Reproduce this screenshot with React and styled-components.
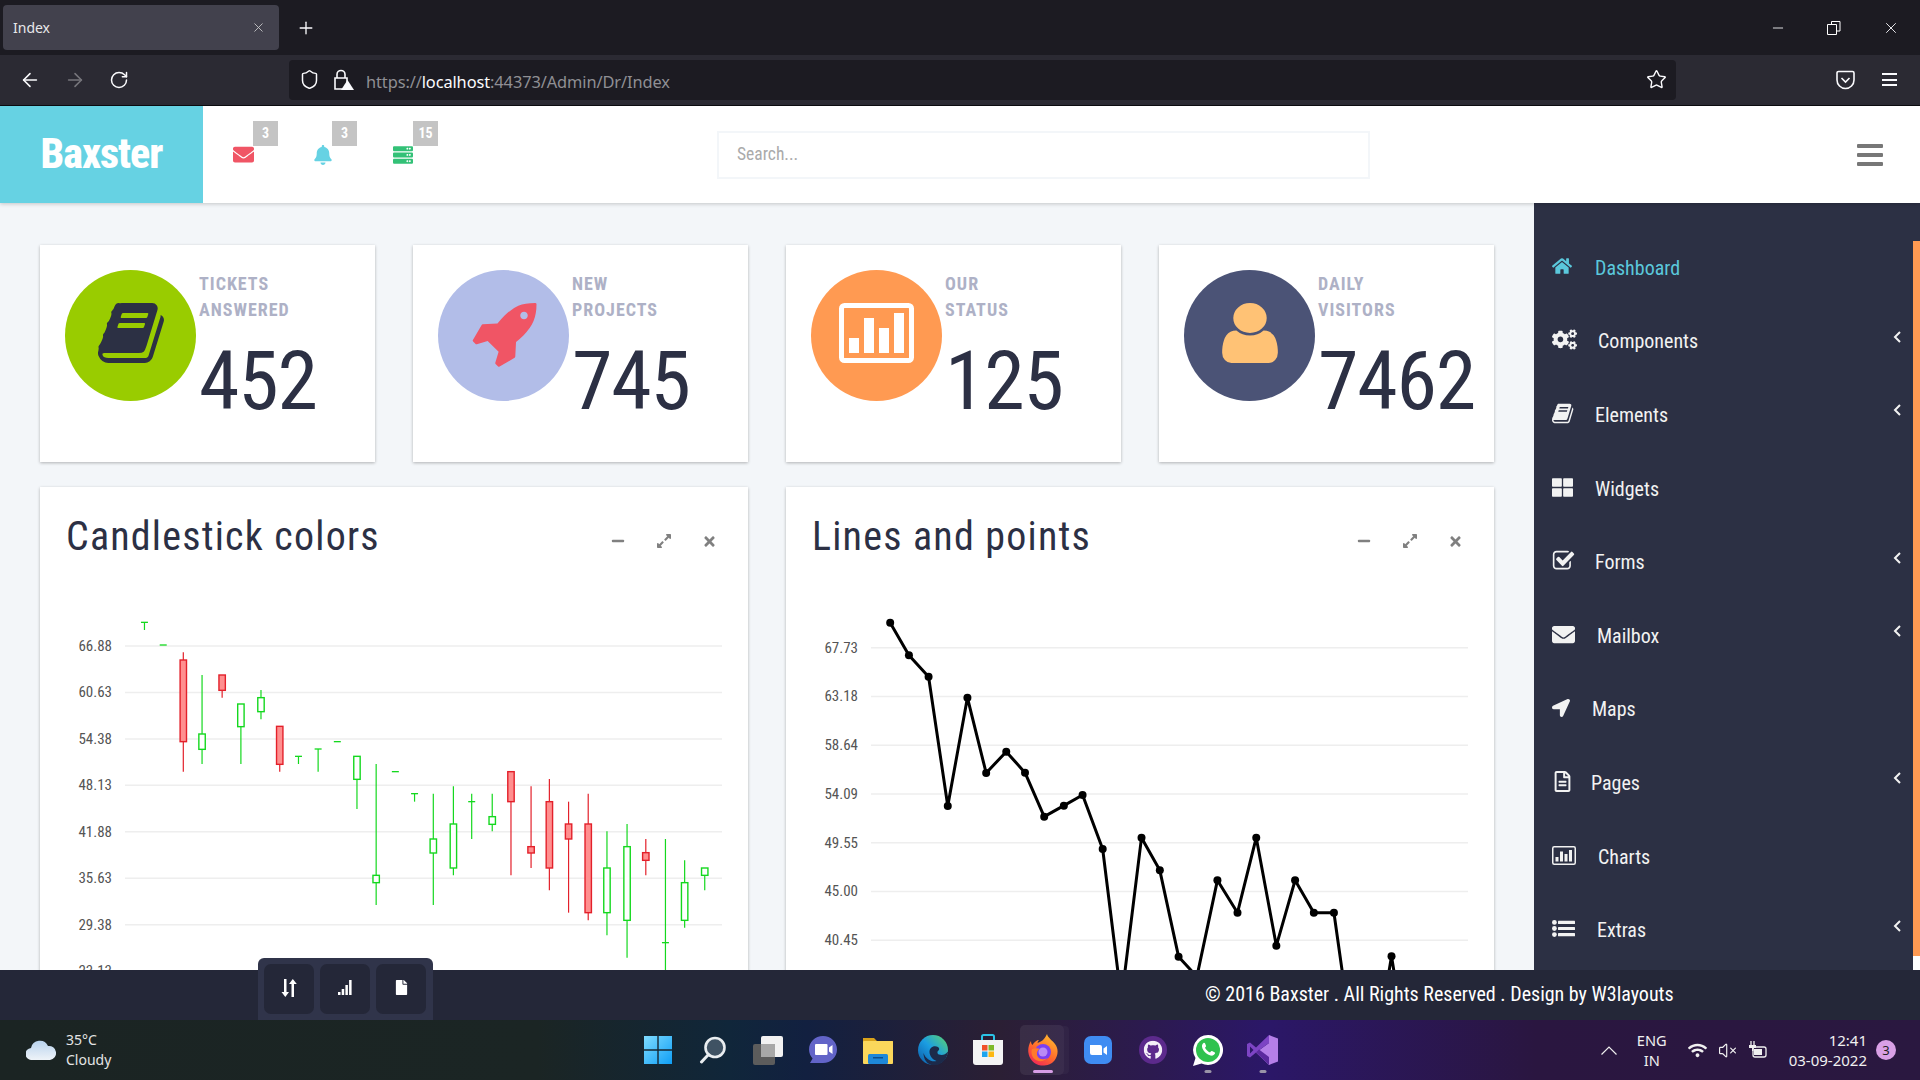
import React from 'react';
import styled, { createGlobalStyle, css } from 'styled-components';
import { FaHome, FaCogs, FaThLarge, FaEnvelope, FaLocationArrow, FaRegFileAlt, FaBell, FaServer, FaMinus, FaExpandAlt, FaTimes, FaFile, FaGithub, FaWifi } from 'react-icons/fa';
import { ArrowLeft, ArrowRight, RotateCw, Shield, Star, X, Plus, Minus, VolumeX } from 'lucide-react';

const BOOK = 'M1639 478q40 57 18 129l-275 906q-19 64-76.5 107.5t-122.5 43.5h-923q-77 0-148.5-53.5t-99.5-131.5q-24-67-2-127 0-4 3-27t4-37q1-8-3-21.5t-3-19.5q2-11 8-21t16.5-23.5 16.5-23.5q23-38 45-91.5t30-91.5q3-10 .5-30t-.5-28q3-11 17-28t17-23q21-36 42-92t25-90q1-9-2.5-32t.5-28q4-13 22-30.5t22-22.5q19-26 42.5-84.5t27.5-96.5q1-8-3-25.5t-2-26.5q2-8 9-18t18-23 17-21q8-12 16.5-30.5t15-35 16-36 19.5-32 26.5-23.5 36-11.5 47.5 5.5l-1 3q38-9 51-9h761q74 0 114 56t18 130l-274 906q-36 119-71.5 153.5t-128.5 34.5h-869q-27 0-38 15-11 16-1 43 24 70 144 70h923q29 0 56-15.5t35-41.5l300-987q7-22 5-57 38 15 59 43zm-1064 2q-4 13 2 22.5t20 9.5h608q13 0 25.5-9.5t16.5-22.5l21-64q4-13-2-22.5t-20-9.5h-608q-13 0-25.5 9.5t-16.5 22.5zm-83 256q-4 13 2 22.5t20 9.5h608q13 0 25.5-9.5t16.5-22.5l21-64q4-13-2-22.5t-20-9.5h-608q-13 0-25.5 9.5t-16.5 22.5z';
const ROCKET = 'M1504 448q0-40-28-68t-68-28-68 28-28 68 28 68 68 28 68-28 28-68zm224-288q0 249-75.5 430.5t-253.5 360.5q-81 80-195 176l-20 379q-2 16-16 26l-384 224q-7 4-16 4-12 0-23-9l-64-64q-13-14-8-32l85-276-281-281-276 85q-3 1-9 1-14 0-23-9l-64-64q-17-19-5-39l224-384q10-14 26-16l379-20q96-114 176-195 188-187 358-258t431-71q14 0 24 9.5t10 22.5z';
const USER = 'M1536 1399q0 109-62.5 187t-150.5 78h-854q-88 0-150.5-78t-62.5-187q0-85 8.5-160.5t31.5-152 58.5-131 94-89 134.5-34.5q131 128 313 128t313-128q76 0 134.5 34.5t94 89 58.5 131 31.5 152 8.5 160.5zm-256-887q0 159-112.5 271.5t-271.5 112.5-271.5-112.5-112.5-271.5 112.5-271.5 271.5-112.5 271.5 112.5 112.5 271.5z';
const CHECK = 'M1472 930v318q0 119-84.5 203.5t-203.5 84.5h-832q-119 0-203.5-84.5t-84.5-203.5v-832q0-119 84.5-203.5t203.5-84.5h832q63 0 117 25 15 7 18 23 3 17-9 29l-49 49q-10 10-23 10-3 0-9-2-23-6-45-6h-832q-66 0-113 47t-47 113v832q0 66 47 113t113 47h832q66 0 113-47t47-113v-254q0-13 9-22l64-64q10-10 23-10 6 0 12 3 20 8 20 29zm231-489l-814 814q-24 24-57 24t-57-24l-430-430q-24-24-24-57t24-57l110-110q24-24 57-24t57 24l263 263 647-647q24-24 57-24t57 24l110 110q24 24 24 57t-24 57z';

const narrow = css`
  font-family: "Roboto Condensed", Roboto, "Liberation Sans", sans-serif;
  font-stretch: 75%;
`;
const ui = css`
  font-family: "Noto Sans", "Open Sans", sans-serif;
`;

const GlobalStyle = createGlobalStyle`
  * { box-sizing: border-box; }
  html, body { margin: 0; height: 100%; overflow: hidden; background: #f3f6f9; }
`;

const Page = styled.div`
  width: 1920px;
  height: 1080px;
  display: flex;
  flex-direction: column;
  overflow: hidden;
  position: relative;
`;

/* browser chrome */
const TabStrip = styled.div`
  height: 55px;
  background: #1c1b22;
  display: flex;
  align-items: flex-start;
  color: #fbfbfe;
  ${ui}
`;
const Tab = styled.div`
  width: 276px;
  height: 45px;
  margin: 5px 0 0 3px;
  padding: 0 13px 0 10px;
  background: #42414d;
  border-radius: 4px;
  display: flex;
  align-items: center;
  justify-content: space-between;
  font-size: 14px;
  color: #e8e8ea;
`;
const NewTab = styled.div`
  margin: 14px 0 0 17px;
  height: 28px;
  display: flex;
  align-items: center;
`;
const WindowButtons = styled.div`
  margin-left: auto;
  height: 55px;
  display: flex;
  align-items: center;
  padding-right: 20px;
  gap: 41px;
`;
const ToolBar = styled.div`
  height: 51px;
  padding-bottom: 1px;
  background: #2b2a33;
  border-bottom: 1px solid #0c0c10;
  display: flex;
  align-items: center;
  color: #fbfbfe;
`;
const NavButtons = styled.div`
  width: 289px;
  display: flex;
  align-items: center;
  padding-left: 19px;
  gap: 23px;
`;
const UrlBar = styled.div`
  width: 1387px;
  height: 40px;
  background: #1c1b22;
  border-radius: 4px;
  display: flex;
  align-items: center;
  padding: 0 9px 0 10px;
  ${ui}
`;
const LockGlyph = styled.svg`
  margin-left: 12px;
`;
const UrlText = styled.div`
  margin: 3px 0 0 12px;
  font-size: 16.4px;
  color: #8f8f94;
  letter-spacing: -0.1px;
  b { font-weight: 400; color: #fbfbfe; }
`;
const UrlSpacer = styled.div`
  flex: 1;
`;
const ToolRight = styled.div`
  display: flex;
  align-items: center;
  gap: 27px;
  margin-left: 160px;
`;
const MenuLines = styled.div`
  width: 15px;
  height: 13px;
  border-top: 2px solid #fbfbfe;
  border-bottom: 2px solid #fbfbfe;
  position: relative;
  &::after {
    content: "";
    position: absolute;
    left: 0;
    right: 0;
    top: 3.5px;
    height: 2px;
    background: #fbfbfe;
  }
`;

/* app header */
const Header = styled.header`
  height: 97px;
  background: #fff;
  display: flex;
  align-items: center;
  box-shadow: 0 1px 4px rgba(0, 0, 0, 0.2);
  position: relative;
  z-index: 2;
`;
const Logo = styled.div`
  width: 203px;
  height: 97px;
  background: #66d2e3;
  color: #fff;
  display: flex;
  align-items: center;
  justify-content: center;
  font-size: 42px;
  font-weight: 800;
  letter-spacing: -1px;
  padding-bottom: 2px;
  ${narrow}
`;
const Notify = styled.div`
  display: flex;
  padding-left: 30px;
`;
const NotifyItem = styled.div`
  width: 80px;
  height: 20px;
  display: flex;
  align-items: center;
  position: relative;
  color: ${p => p.$color};
`;
const Badge = styled.span`
  position: absolute;
  left: ${p => p.$left}px;
  top: -24px;
  width: 25px;
  height: 25px;
  background: #c4c4c4;
  color: #fff;
  font-size: 14px;
  font-weight: 700;
  display: flex;
  align-items: center;
  justify-content: center;
  ${narrow}
`;
const Search = styled.div`
  width: 653px;
  height: 48px;
  margin-left: 244px;
  border: 2px solid #f3f6f9;
  display: flex;
  align-items: center;
  padding: 0 0 2px 18px;
  color: #aaa;
  font-size: 17.5px;
  ${narrow}
`;
const Burger = styled.div`
  margin-left: auto;
  margin-right: 37px;
  width: 26px;
  height: 22px;
  display: flex;
  flex-direction: column;
  justify-content: space-between;
  span {
    height: 4px;
    background: #777;
    border-radius: 1px;
  }
`;

/* body */
const Body = styled.div`
  flex: 1;
  min-height: 0;
  display: flex;
`;
const Main = styled.main`
  width: 1534px;
  padding: 42px 40px 0;
  overflow: hidden;
  background: #f3f6f9;
`;
const StatRow = styled.div`
  display: grid;
  grid-template-columns: repeat(4, 335px);
  gap: 38px;
  margin-bottom: 25px;
`;
const StatCard = styled.div`
  height: 217px;
  background: #fff;
  box-shadow: 0 1px 3px rgba(0, 0, 0, 0.28);
  padding: 25px 0 0 25px;
  display: flex;
`;
const Circle = styled.div`
  width: 131px;
  height: 131px;
  flex: none;
  border-radius: 50%;
  background: ${p => p.$bg};
  display: flex;
  align-items: center;
  justify-content: center;
  padding: 0 0 5px ${p => p.$shift || 0}px;
  margin-right: 3px;
`;
const StatText = styled.div`
  ${narrow}
`;
const StatLabel = styled.div`
  font-size: 18px;
  line-height: 26px;
  font-weight: 700;
  letter-spacing: 1px;
  color: #aeb1c6;
  text-transform: uppercase;
  margin-top: 1px;
`;
const StatNumber = styled.div`
  font-size: 82px;
  line-height: 82px;
  font-weight: 400;
  letter-spacing: -1.2px;
  color: #2c3044;
  margin-top: 17px;
`;
const PanelRow = styled.div`
  display: grid;
  grid-template-columns: repeat(2, 708px);
  gap: 38px;
`;
const Panel = styled.section`
  height: 600px;
  background: #fff;
  box-shadow: 0 1px 3px rgba(0, 0, 0, 0.28);
`;
const PanelHead = styled.div`
  height: 103px;
  padding: 27px 0 0 26px;
  display: flex;
  align-items: flex-start;
  justify-content: space-between;
`;
const PanelTitle = styled.h3`
  margin: 0;
  font-size: 40px;
  line-height: 46px;
  font-weight: 400;
  letter-spacing: 1.2px;
  color: #2c3044;
  ${narrow}
`;
const PanelControls = styled.div`
  display: flex;
  align-items: center;
  gap: 30.5px;
  margin: 19px 31px 0 0;
  color: #808080;
`;
const ChartSvg = styled.svg`
  display: block;
  text {
    ${narrow}
    font-size: 15px;
    fill: #555;
  }
`;

/* sidebar */
const Sidebar = styled.aside`
  width: 386px;
  background: #2c3044;
  display: flex;
`;
const Nav = styled.nav`
  flex: 1;
  padding-top: 28px;
`;
const NavRow = styled.div`
  height: 73.6px;
  padding: 0 12px 0 18px;
  display: flex;
  align-items: center;
  color: ${p => (p.$active ? '#5bc8dc' : '#f2f2f2')};
  font-size: 20px;
  ${narrow}
`;
const NavIcon = styled.div`
  width: ${p => p.$w}px;
  flex: none;
  display: flex;
  align-items: center;
  margin-top: -3px;
`;
const Chevron = styled.svg`
  margin-left: auto;
  margin-top: -9px;
`;
const ScrollTrack = styled.div`
  width: 7px;
  padding-top: 38px;
  display: flex;
  flex-direction: column;
`;
const ScrollThumb = styled.div`
  height: 715px;
  background: #ff9a52;
`;
const ScrollRest = styled.div`
  flex: 1;
  background: #fff;
`;

/* footer */
const Footer = styled.footer`
  height: 50px;
  background: #242738;
  color: #fff;
  font-size: 20px;
  padding: 0 0 2px 1205px;
  display: flex;
  align-items: center;
  ${narrow}
`;
const FloatBar = styled.div`
  position: absolute;
  left: 258px;
  top: 958px;
  width: 175px;
  height: 62px;
  background: #30344a;
  border-radius: 6px 6px 0 0;
  padding: 6px;
  display: flex;
  gap: 6px;
`;
const FloatButton = styled.div`
  width: 50px;
  height: 50px;
  background: #242738;
  border-radius: 7px;
  color: #fff;
  display: flex;
  align-items: center;
  justify-content: center;
  padding-bottom: 3px;
`;

/* windows taskbar */
const Taskbar = styled.div`
  height: 60px;
  background: linear-gradient(90deg, #1b2423 0%, #1b2524 28%, #10263a 38%, #122040 42%, #2b1f34 52%, #2c1a50 60%, #2b1768 66%, #2a1640 80%, #2a1840 100%);
  display: flex;
  align-items: center;
  position: relative;
  color: #fff;
  ${ui}
`;
const Weather = styled.div`
  width: 630px;
  padding-left: 26px;
  display: flex;
  align-items: center;
  gap: 10px;
`;
const WeatherText = styled.div`
  font-size: 14px;
  line-height: 20px;
  color: #e4e4e4;
`;
const Apps = styled.div`
  display: flex;
`;
const AppSlot = styled.div`
  width: 55px;
  height: 60px;
  display: flex;
  align-items: center;
  justify-content: center;
  position: relative;
  ${p => p.$active && css`
    &::before {
      content: "";
      position: absolute;
      left: 5px;
      top: 5px;
      width: 44px;
      height: 50px;
      border-radius: 5px;
      background: rgba(255, 255, 255, 0.07);
      box-shadow: 6px 0 0 -1px rgba(255, 255, 255, 0.03);
    }
  `}
  &::after {
    ${p => p.$pill && css`content: "";`}
    position: absolute;
    bottom: 7px;
    left: 50%;
    transform: translateX(-50%);
    width: ${p => (p.$active ? 20 : 7)}px;
    height: 3px;
    border-radius: 2px;
    background: ${p => (p.$active ? '#d79ee6' : '#9a94a8')};
  }
  svg { position: relative; }
`;
const Tray = styled.div`
  margin-left: auto;
  display: flex;
  align-items: center;
  font-size: 14.6px;
  color: #f0f0f0;
  padding-right: 24px;
`;
const TrayLang = styled.div`
  text-align: center;
  line-height: 20px;
  margin: 0 21px 0 20px;
`;
const TrayIcons = styled.div`
  display: flex;
  align-items: center;
  gap: 11px;
`;
const Clock = styled.div`
  text-align: right;
  line-height: 20px;
  font-size: 15px;
  margin: 0 9px 0 21px;
`;
const Counter = styled.div`
  width: 20px;
  height: 20px;
  border-radius: 50%;
  background: #d9a0e6;
  color: #222;
  font-size: 13px;
  display: flex;
  align-items: center;
  justify-content: center;
`;

const Fa4 = ({ d, w, h, fill }) => (
  <svg width={w} height={h} viewBox="0 0 1792 1792" preserveAspectRatio="none" fill={fill}><path d={d} /></svg>
);

const Angle = () => (
  <Chevron width="8" height="12" viewBox="0 0 8 12" fill="none" stroke="#f2f2f2" strokeWidth="2"><path d="M7 1 2 6l5 5" /></Chevron>
);

const ChartGlyph = () => (
  <svg width="24" height="19" viewBox="0 0 24 19" fill="#f2f2f2">
    <rect x=".75" y=".75" width="22.500" height="17.500" rx="1.500" fill="none" stroke="#f2f2f2" strokeWidth="1.500" />
    <rect x="3.500" y="11" width="3" height="4.500" />
    <rect x="8" y="5.500" width="3" height="10" />
    <rect x="12.500" y="8" width="3" height="7.500" />
    <rect x="17" y="4" width="3" height="11.500" />
  </svg>
);

const ListGlyph = () => (
  <svg width="23" height="17" viewBox="0 0 23 17" fill="#f2f2f2">
    <circle cx="2.400" cy="2.400" r="2.400" />
    <circle cx="2.400" cy="8.500" r="2.400" />
    <circle cx="2.400" cy="14.600" r="2.400" />
    <rect x="6" y="0.800" width="17" height="3.200" rx=".5" />
    <rect x="6" y="6.900" width="17" height="3.200" rx=".5" />
    <rect x="6" y="13" width="17" height="3.200" rx=".5" />
  </svg>
);

const stats = [
  { l1: 'Tickets', l2: 'Answered', n: '452', bg: '#99cc00', shift: 5, icon: <Fa4 d={BOOK} w={71} h={70} fill="#2c3044" /> },
  { l1: 'New', l2: 'Projects', n: '745', bg: '#b2bde8', icon: <Fa4 d={ROCKET} w={70} h={70} fill="#f05565" /> },
  {
    l1: 'Our', l2: 'Status', n: '125', bg: '#ff9a52', icon: (
      <svg width="75" height="60" viewBox="0 0 75 60" fill="#fff">
        <rect x="2.5" y="2.5" width="70" height="55" rx="3" fill="none" stroke="#fff" strokeWidth="5" />
        <rect x="10" y="35" width="10" height="15" />
        <rect x="25" y="15" width="10" height="35" />
        <rect x="40" y="25" width="10" height="25" />
        <rect x="55" y="10" width="10" height="40" />
      </svg>
    ),
  },
  { l1: 'Daily', l2: 'Visitors', n: '7462', bg: '#4b5376', icon: <Fa4 d={USER} w={78} h={70} fill="#ffc275" /> },
];

const nav = [
  { t: 'Dashboard', w: 43, active: true, icon: <FaHome size={20} /> },
  { t: 'Components', w: 46, more: true, icon: <FaCogs size={25} /> },
  { t: 'Elements', w: 43, more: true, icon: <Fa4 d={BOOK} w={23} h={23} fill="#f2f2f2" /> },
  { t: 'Widgets', w: 43, icon: <FaThLarge size={21} /> },
  { t: 'Forms', w: 43, more: true, icon: <Fa4 d={CHECK} w={23} h={24} fill="#f2f2f2" /> },
  { t: 'Mailbox', w: 45, more: true, icon: <FaEnvelope size={23} /> },
  { t: 'Maps', w: 40, icon: <FaLocationArrow size={18} /> },
  { t: 'Pages', w: 39, more: true, icon: <FaRegFileAlt size={21} /> },
  { t: 'Charts', w: 46, icon: <ChartGlyph /> },
  { t: 'Extras', w: 45, more: true, icon: <ListGlyph /> },
];

// [x, wickTop, wickBottom, bodyTop, bodyBottom] in picture units, see toX / toY
const candles = [
  [234, 97, 120, 97, 97, 'g'], [276, 165, 165, 165, 165, 'g'], [321, 187, 545, 210, 455, 'r'],
  [363, 255, 522, 432, 478, 'g'], [408, 255, 323, 255, 301, 'r'], [450, 342, 522, 342, 410, 'g'],
  [495, 300, 388, 323, 365, 'g'], [537, 409, 545, 409, 523, 'r'], [579, 499, 522, 499, 499, 'g'],
  [623, 477, 545, 477, 477, 'g'], [666, 455, 455, 455, 455, 'g'], [710, 499, 657, 499, 568, 'g'],
  [753, 522, 945, 856, 878, 'g'], [796, 545, 545, 545, 545, 'g'], [839, 611, 635, 611, 611, 'g'],
  [881, 611, 945, 747, 789, 'g'], [926, 589, 856, 702, 834, 'g'], [967, 611, 747, 635, 635, 'g'],
  [1013, 611, 724, 680, 703, 'g'], [1055, 545, 856, 545, 635, 'r'], [1100, 589, 834, 770, 789, 'r'],
  [1141, 567, 901, 635, 834, 'r'], [1184, 635, 968, 702, 747, 'r'], [1228, 611, 991, 702, 968, 'r'],
  [1270, 724, 1036, 834, 968, 'g'], [1315, 702, 1103, 770, 991, 'g'], [1357, 747, 856, 788, 811, 'r'],
  [1401, 747, 1200, 1058, 1058, 'g'], [1444, 811, 1013, 878, 991, 'g'], [1489, 834, 901, 834, 856, 'g'],
];
const toX = v => v / 2.24;
const toY = v => v / 3;

const CandleChart = () => {
  const labels = ['66.88', '60.63', '54.38', '48.13', '41.88', '35.63', '29.38', '23.13'];
  return (
    <ChartSvg width="708" height="420">
      {labels.map((l, i) => {
        const y = 56 + i * 46.45;
        return (
          <g key={l}>
            <line x1="85" x2="682" y1={y} y2={y} stroke="#eee" strokeWidth="1.5" />
            <text x="72" y={y + 5} textAnchor="end">{l}</text>
          </g>
        );
      })}
      {candles.map(([x, wt, wb, bt, bb, c]) => {
        const col = c === 'r' ? '#e3202a' : '#14d81e';
        const flat = bt === bb;
        return (
          <g key={x}>
            <line x1={toX(x)} x2={toX(x)} y1={toY(wt)} y2={toY(wb)} stroke={col} strokeWidth="1.2" />
            {flat
              ? <line x1={toX(x) - 3.5} x2={toX(x) + 3.5} y1={toY(bt)} y2={toY(bt)} stroke={col} strokeWidth="1.3" />
              : <rect x={toX(x) - 3.2} y={toY(bt)} width="6.4" height={toY(bb - bt)} fill={c === 'r' ? '#ff8f8f' : '#fff'} stroke={col} strokeWidth="1.4" />}
          </g>
        );
      })}
    </ChartSvg>
  );
};

const linePoints = [
  [202, 98], [244, 196], [288, 260], [331, 648], [375, 323], [417, 549], [462, 485], [504, 548], [547, 680],
  [591, 647], [633, 615], [678, 777], [720, 1230], [765, 743], [806, 841], [848, 1100], [889, 1160], [935, 871],
  [980, 968], [1022, 743], [1067, 1067], [1109, 871], [1151, 968], [1196, 968], [1238, 1366], [1282, 1443],
  [1325, 1099], [1367, 1443],
];

const LineChart = () => {
  const labels = ['67.73', '63.18', '58.64', '54.09', '49.55', '45.00', '40.45'];
  const px = v => 14 + v / 2.24;
  return (
    <ChartSvg width="708" height="420">
      {labels.map((l, i) => {
        const y = 57.7 + i * 48.75;
        return (
          <g key={l}>
            <line x1="85" x2="682" y1={y} y2={y} stroke="#eee" strokeWidth="1.5" />
            <text x="72" y={y + 5} textAnchor="end">{l}</text>
          </g>
        );
      })}
      <polyline fill="none" stroke="#000" strokeWidth="3" strokeLinejoin="round"
        points={linePoints.map(([x, y]) => `${px(x)},${toY(y)}`).join(' ')} />
      {linePoints.map(([x, y]) => <circle key={x} cx={px(x)} cy={toY(y)} r="4" fill="#000" />)}
    </ChartSvg>
  );
};

const PanelButtons = () => (
  <PanelControls>
    <FaMinus size={14} />
    <FaExpandAlt size={16} />
    <FaTimes size={15} />
  </PanelControls>
);

const WinLogo = () => (
  <svg width="30" height="30" viewBox="0 0 30 30">
    <defs><linearGradient id="win" x1="0" y1="0" x2="1" y2="1"><stop offset="0" stopColor="#7fdcff" /><stop offset="1" stopColor="#0f9ef5" /></linearGradient></defs>
    <path fill="url(#win)" d="M1 1h13.3v13.3H1zM15.7 1H29v13.3H15.7zM1 15.7h13.3V29H1zM15.7 15.7H29V29H15.7z" />
  </svg>
);
const SearchGlyph = () => (
  <svg width="28" height="28" viewBox="0 0 28 28">
    <circle cx="16" cy="11.5" r="9.5" fill="#3f5263" stroke="#e9edf0" strokeWidth="2.6" />
    <path d="M9.5 18.5 2.5 26" stroke="#e9edf0" strokeWidth="3" strokeLinecap="round" />
  </svg>
);
const TaskView = () => (
  <svg width="30" height="30" viewBox="0 0 30 30">
    <rect x="0" y="9" width="22" height="21" rx="2" fill="#5c5c5c" />
    <rect x="8" y="1" width="22" height="21" rx="2" fill="#f2f2f2" />
    <rect x="8" y="9" width="14" height="13" fill="#a8a8a8" />
  </svg>
);
const ChatIcon = () => (
  <svg width="28" height="30" viewBox="0 0 28 30">
    <path fill="#6264c8" d="M14 1c8 0 14 6 14 13.5S22 28 14 28H1l2.6-4.5C1.500 21 0 18 0 14.500 0 7 6 1 14 1z" />
    <path fill="#fff" d="M7 9h10.500a1 1 0 0 1 1 1v9a1 1 0 0 1-1 1H7a1 1 0 0 1-1-1v-9a1 1 0 0 1 1-1zM20 12.500l3.500-2.500v9L20 16.500z" />
  </svg>
);
const FolderIcon = () => (
  <svg width="30" height="30" viewBox="0 0 30 30">
    <path fill="#d9a21b" d="M0 3h11l3 3h16v6H0z" />
    <rect y="6" width="30" height="23" rx="1" fill="#fbd75b" />
    <rect x="5" y="19" width="20" height="10" rx="1.500" fill="#1e88d8" />
    <rect x="10" y="22" width="10" height="1.500" fill="#0d4f8c" />
  </svg>
);
const EdgeIcon = () => (
  <svg width="30" height="30" viewBox="0 0 30 30">
    <defs><linearGradient id="edge" x1="0" y1="1" x2="1" y2="0"><stop offset="0" stopColor="#0c59a4" /><stop offset=".5" stopColor="#1b9de2" /><stop offset="1" stopColor="#5fd66a" /></linearGradient></defs>
    <circle cx="15" cy="15" r="15" fill="url(#edge)" />
    <path fill="#1c2a4a" d="M29.500 17c-2 3-6 3.500-8.500 2.500-2-.8-2-3-.5-4 1-.7 1-2.500-.5-3.500-3-2-8-.5-8.500 4-.4 4 2.500 8.500 7 10-5 1.500-11-2-13-8 0 3 1 10 8 12 8 1.500 15-4 16.500-13z" />
  </svg>
);
const StoreIcon = () => (
  <svg width="30" height="32" viewBox="0 0 30 32">
    <path d="M9 6V2.500A1.500 1.500 0 0 1 10.500 1h9A1.500 1.500 0 0 1 21 2.500V6" fill="none" stroke="#2bc3e6" strokeWidth="2" />
    <path d="M0 6h30v22a3 3 0 0 1-3 3H3a3 3 0 0 1-3-3z" fill="#f4f4f4" />
    <path fill="#f0512a" d="M9 11h5.500v5.500H9z" /><path fill="#7fba2a" d="M15.500 11H21v5.500h-5.500z" />
    <path fill="#1ea5ee" d="M9 17.500h5.500V23H9z" /><path fill="#fdb813" d="M15.500 17.500H21V23h-5.500z" />
  </svg>
);
const FirefoxIcon = () => (
  <svg width="30" height="32" viewBox="0 0 30 32">
    <defs>
      <linearGradient id="fx" x1="0.8" y1="0" x2="0.2" y2="1"><stop offset="0" stopColor="#ffbd2e" /><stop offset=".55" stopColor="#ff6a2b" /><stop offset="1" stopColor="#f0245a" /></linearGradient>
    </defs>
    <path fill="url(#fx)" d="M19 0c1 4 5 6 8 10 4 5 3 12-.5 16.500C23 31 17 32 13 31.500 6 30.500 1 25 .3 18 0 14 1 10 3 7c0 2 .5 3 1.500 4C6 8 9 6 11 6c-1 1-1.500 2-1.500 3 3-1 7-3 9.500-9z" />
    <circle cx="15" cy="18" r="8" fill="#7b3ff0" />
    <circle cx="15" cy="18" r="4.500" fill="#b98bf5" />
    <path fill="#ff7a2b" d="M4 15c3-1 6-1 8 0-3 1-4 5-2 8 2 2.500 6 3 9 1-3 4-9 4-12.500 1C3.500 22.500 3 18 4 15z" />
  </svg>
);
const ZoomIcon = () => (
  <svg width="28" height="28" viewBox="0 0 28 28">
    <rect width="28" height="28" rx="7" fill="#3f8cf2" />
    <path fill="#fff" d="M6 9h10a2 2 0 0 1 2 2v8H8a2 2 0 0 1-2-2zM19.500 12.500 23 10v9l-3.500-2.500z" />
  </svg>
);
const GithubIcon = () => (
  <svg width="28" height="28" viewBox="0 0 28 28">
    <circle cx="14" cy="14" r="14" fill="#5c2a8c" />
    <g transform="translate(4.500 4.500)"><FaGithub size={19} color="#f4f0f8" /></g>
  </svg>
);
const WhatsappIcon = () => (
  <svg width="30" height="31" viewBox="0 0 30 31">
    <path fill="#fff" d="M15 0a15 15 0 1 1-6.500 28.500L0 31l2.500-8A15 15 0 0 1 15 0z" />
    <circle cx="15" cy="15" r="12" fill="#2fc24f" />
    <path fill="#fff" d="M10.500 8c-1.500 1-2 3-1 5.500 1.500 3.500 4.500 6 8 7 2 .5 3.800-.5 4.500-2 .2-.6 0-1-.5-1.300l-2.500-1.200c-.5-.2-.9 0-1.200.4l-.8 1c-2-.8-4-2.700-5-4.700l.8-.9c.3-.3.3-.7.200-1.100l-1-2.400c-.3-.5-1-.7-1.500-.3z" />
  </svg>
);
const VsIcon = () => (
  <svg width="31" height="30" viewBox="0 0 31 30">
    <path fill="#b57fe8" d="M22 0l9 3.500v23L22 30 9 17.500 22 8z" />
    <path fill="#7d44c4" d="M22 0v8L9 17.500 3 22.500 0 21V9l3-1.500 6 5L22 0zM3 11.500v7l3.500-3.500z" />
    <path fill="#5b2a9e" d="M22 30 9 17.500l3-3 10 7.500z" />
  </svg>
);
const apps = [
  { c: <WinLogo /> }, { c: <SearchGlyph /> }, { c: <TaskView /> }, { c: <ChatIcon /> }, { c: <FolderIcon /> }, { c: <EdgeIcon /> },
  { c: <StoreIcon /> }, { c: <FirefoxIcon />, active: true, pill: true }, { c: <ZoomIcon /> }, { c: <GithubIcon /> },
  { c: <WhatsappIcon />, pill: true }, { c: <VsIcon />, pill: true },
];

export default function App() {
  return (
    <Page>
      <GlobalStyle />
      <TabStrip>
        <Tab>Index<X size={15} strokeWidth={1.4} color="#c9c9cc" /></Tab>
        <NewTab><Plus size={20} strokeWidth={1.6} /></NewTab>
        <WindowButtons>
          <Minus size={16} strokeWidth={1.3} />
          <svg width="14" height="14" viewBox="0 0 14 14" fill="none" stroke="#fff"><path d="M4.500 3.500V.5h8.500V10h-3M.5 3.500h9v10h-9z" /></svg>
          <X size={18} strokeWidth={1.2} />
        </WindowButtons>
      </TabStrip>
      <ToolBar>
        <NavButtons>
          <ArrowLeft size={22} strokeWidth={1.7} />
          <ArrowRight size={22} strokeWidth={1.7} color="#77767c" />
          <RotateCw size={20} strokeWidth={1.8} />
        </NavButtons>
        <UrlBar>
          <Shield size={21} strokeWidth={1.7} />
          <LockGlyph width="22" height="22" viewBox="0 0 22 22" fill="none" stroke="#fbfbfe" strokeWidth="1.600">
            <path d="M5 9V5.500a4 4 0 0 1 8 0V9M3 9h12v11H3z" />
            <path d="M15.500 11 22 21H9z" fill="#fbfbfe" stroke="none" />
          </LockGlyph>
          <UrlText>https://<b>localhost</b>:44373/Admin/Dr/Index</UrlText>
          <UrlSpacer />
          <Star size={21} strokeWidth={1.6} />
        </UrlBar>
        <ToolRight>
          <svg width="19" height="20" viewBox="0 0 19 20" fill="none" stroke="#fbfbfe" strokeWidth="1.600">
            <path d="M2.500 1.500h14a1.500 1.500 0 0 1 1.500 1.500v7a8.500 8.500 0 0 1-17 0V3a1.500 1.500 0 0 1 1.500-1.500z" />
            <path d="M5.500 8 9.500 12l4-4" />
          </svg>
          <MenuLines />
        </ToolRight>
      </ToolBar>
      <Header>
        <Logo>Baxster</Logo>
        <Notify>
          <NotifyItem $color="#f05565"><FaEnvelope size={21} /><Badge $left={20}>3</Badge></NotifyItem>
          <NotifyItem $color="#66d2e3"><FaBell size={20} /><Badge $left={19}>3</Badge></NotifyItem>
          <NotifyItem $color="#33c177"><FaServer size={20} /><Badge $left={20}>15</Badge></NotifyItem>
        </Notify>
        <Search>Search...</Search>
        <Burger><span /><span /><span /></Burger>
      </Header>
      <Body>
        <Main>
          <StatRow>
            {stats.map(s => (
              <StatCard key={s.n}>
                <Circle $bg={s.bg} $shift={s.shift}>{s.icon}</Circle>
                <StatText>
                  <StatLabel>{s.l1}<br />{s.l2}</StatLabel>
                  <StatNumber>{s.n}</StatNumber>
                </StatText>
              </StatCard>
            ))}
          </StatRow>
          <PanelRow>
            <Panel>
              <PanelHead><PanelTitle>Candlestick colors</PanelTitle><PanelButtons /></PanelHead>
              <CandleChart />
            </Panel>
            <Panel>
              <PanelHead><PanelTitle>Lines and points</PanelTitle><PanelButtons /></PanelHead>
              <LineChart />
            </Panel>
          </PanelRow>
        </Main>
        <Sidebar>
          <Nav>
            {nav.map(n => (
              <NavRow key={n.t} $active={n.active}>
                <NavIcon $w={n.w}>{n.icon}</NavIcon>
                {n.t}
                {n.more && <Angle />}
              </NavRow>
            ))}
          </Nav>
          <ScrollTrack><ScrollThumb /><ScrollRest /></ScrollTrack>
        </Sidebar>
      </Body>
      <Footer>© 2016 Baxster . All Rights Reserved . Design by W3layouts</Footer>
      <FloatBar>
        <FloatButton>
          <svg width="16" height="18" viewBox="0 0 16 18" fill="#fff">
            <path d="M3 0h2.500v13H8l-3.700 5L.5 13H3zM10.500 18h2.500V5h2.800L11.800 0 8 5h2.500z" />
          </svg>
        </FloatButton>
        <FloatButton>
          <svg width="14" height="15" viewBox="0 0 14 15" fill="#fff">
            <path d="M0 12h2.500v3H0zM3.700 9h2.500v6H3.700zM7.400 5h2.500v10H7.400zM11.100 0h2.500v15h-2.500z" />
          </svg>
        </FloatButton>
        <FloatButton><FaFile size={15} /></FloatButton>
      </FloatBar>
      <Taskbar>
        <Weather>
          <svg width="30" height="20" viewBox="0 0 30 20">
            <defs><linearGradient id="cloud" x1="0" y1="0" x2="0" y2="1"><stop offset="0" stopColor="#b9d3ee" /><stop offset="1" stopColor="#eef3f8" /></linearGradient></defs>
            <path fill="url(#cloud)" d="M6 20a6 6 0 0 1-1-12A9 9 0 0 1 22 6a7 7 0 0 1 2 14z" />
          </svg>
          <WeatherText>35°C<br />Cloudy</WeatherText>
        </Weather>
        <Apps>
          {apps.map((a, i) => <AppSlot key={i} $active={a.active} $pill={a.pill}>{a.c}</AppSlot>)}
        </Apps>
        <Tray>
          <svg width="16" height="9" viewBox="0 0 16 9" fill="none" stroke="#eee" strokeWidth="1.200"><path d="M.5 8.500 8 1l7.500 7.500" /></svg>
          <TrayLang>ENG<br />IN</TrayLang>
          <TrayIcons>
            <FaWifi size={19} />
            <VolumeX size={19} strokeWidth={1.5} />
            <svg width="20" height="20" viewBox="0 0 20 20" fill="#f0f0f0">
              <path d="M3 1v4M6 1v4" stroke="#f0f0f0" strokeWidth="1.300" />
              <path d="M1 5h7v3H1zM4 8h1.500v3H4z" />
              <rect x="5" y="7" width="13" height="10" rx="2" fill="none" stroke="#f0f0f0" strokeWidth="1.300" />
              <rect x="6" y="9" width="8" height="6" />
            </svg>
          </TrayIcons>
          <Clock>12:41<br />03-09-2022</Clock>
          <Counter>3</Counter>
        </Tray>
      </Taskbar>
    </Page>
  );
}
